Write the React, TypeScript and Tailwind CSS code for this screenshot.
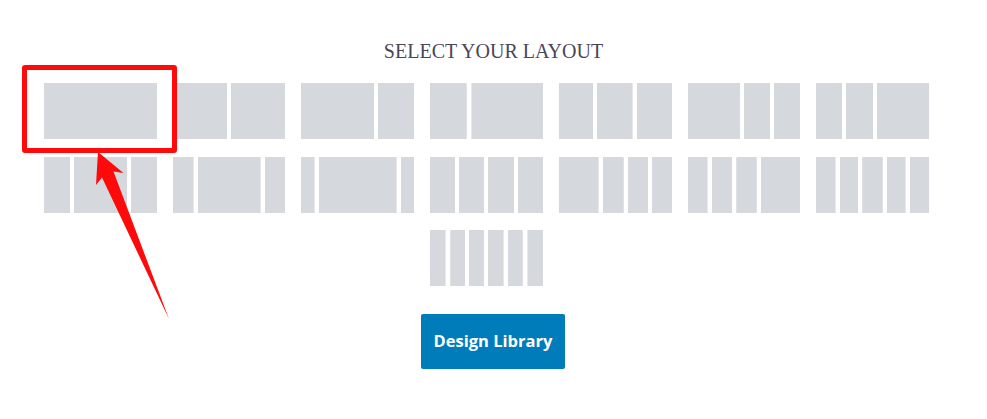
type Edge = 'solid' | 'dot'
interface Col { w: number; l?: Edge; r?: Edge }

// one entry per layout thumb, columns as flex weights
const LAYOUTS: Col[][] = [
  [{ w: 1 }],
  [{ w: 1 }, { w: 1 }],
  [{ w: 2 }, { w: 1 }],
  [{ w: 1, r: 'dot' }, { w: 2, l: 'solid' }],
  [{ w: 1 }, { w: 1, r: 'solid' }, { w: 1 }],
  [{ w: 2 }, { w: 1 }, { w: 1 }],
  [{ w: 1 }, { w: 1 }, { w: 2 }],
  [{ w: 1 }, { w: 2 }, { w: 1 }],
  [{ w: 1, r: 'solid' }, { w: 3, r: 'solid' }, { w: 1 }],
  [{ w: 1, r: 'solid' }, { w: 6, r: 'solid' }, { w: 1 }],
  [{ w: 1 }, { w: 1 }, { w: 1 }, { w: 1 }],
  [{ w: 2, r: 'solid' }, { w: 1, r: 'dot' }, { w: 1 }, { w: 1 }],
  [{ w: 1, r: 'solid' }, { w: 1 }, { w: 1, l: 'dot', r: 'solid' }, { w: 2 }],
  [{ w: 1, r: 'solid' }, { w: 1 }, { w: 1, l: 'dot', r: 'dot' }, { w: 1, r: 'solid' }, { w: 1 }],
  [{ w: 1, r: 'solid' }, { w: 1, l: 'dot' }, { w: 1 }, { w: 1, r: 'solid' }, { w: 1, r: 'dot' }, { w: 1, l: 'solid' }],
]

function Column({ col }: { col: Col }) {
  return (
    <div
      className={[
        'h-full bg-[#d5d9dd] border-[#e6e8eb]',
        col.l === 'solid' ? 'border-l' : col.l === 'dot' ? 'border-l border-dotted border-[#dcdfe2]' : '',
        col.r === 'solid' ? 'border-r' : col.r === 'dot' ? 'border-r border-dotted border-[#dcdfe2]' : '',
      ].join(' ')}
      style={{ flexGrow: col.w, flexBasis: 0 }}
    />
  )
}

export default function App() {
  return (
    <div className="relative w-[987px] h-[419px] bg-white overflow-hidden">
      <h2 className="pt-[39px] text-center text-[20px] leading-[24px] text-[#4a4656] font-['Liberation_Serif',serif]">
        SELECT YOUR LAYOUT
      </h2>

      {/* layout thumbs */}
      <div className="ml-[44px] w-[901px] mt-[20px] flex flex-wrap justify-center">
        {LAYOUTS.map((cols, i) => (
          <div key={i} className="w-[14.2857%] pr-[16px] mb-[17.5px]">
            <div className="flex gap-[4px] h-[56px]">
              {cols.map((c, j) => <Column key={j} col={c} />)}
            </div>
          </div>
        ))}
      </div>

      <div className="flex justify-center mt-[10.5px] pr-px">
        <button
          type="button"
          className="w-[144px] h-[55px] rounded-[2px] bg-[#007cba] text-white text-[16.5px] font-bold font-['Open_Sans',sans-serif]"
        >
          Design Library
        </button>
      </div>

      {/* annotation */}
      <div className="absolute left-[22px] top-[65px] w-[155px] h-[88px] border-[5px] border-[#ff0a0a] rounded-[3px]" />
      <svg className="absolute left-0 top-0" width="987" height="419" viewBox="0 0 987 419">
        <polygon
          points="98,152 123.5,173 113.5,171.5 169,319 102,177.5 96,185"
          fill="#ff0a0a"
        />
      </svg>
    </div>
  )
}
